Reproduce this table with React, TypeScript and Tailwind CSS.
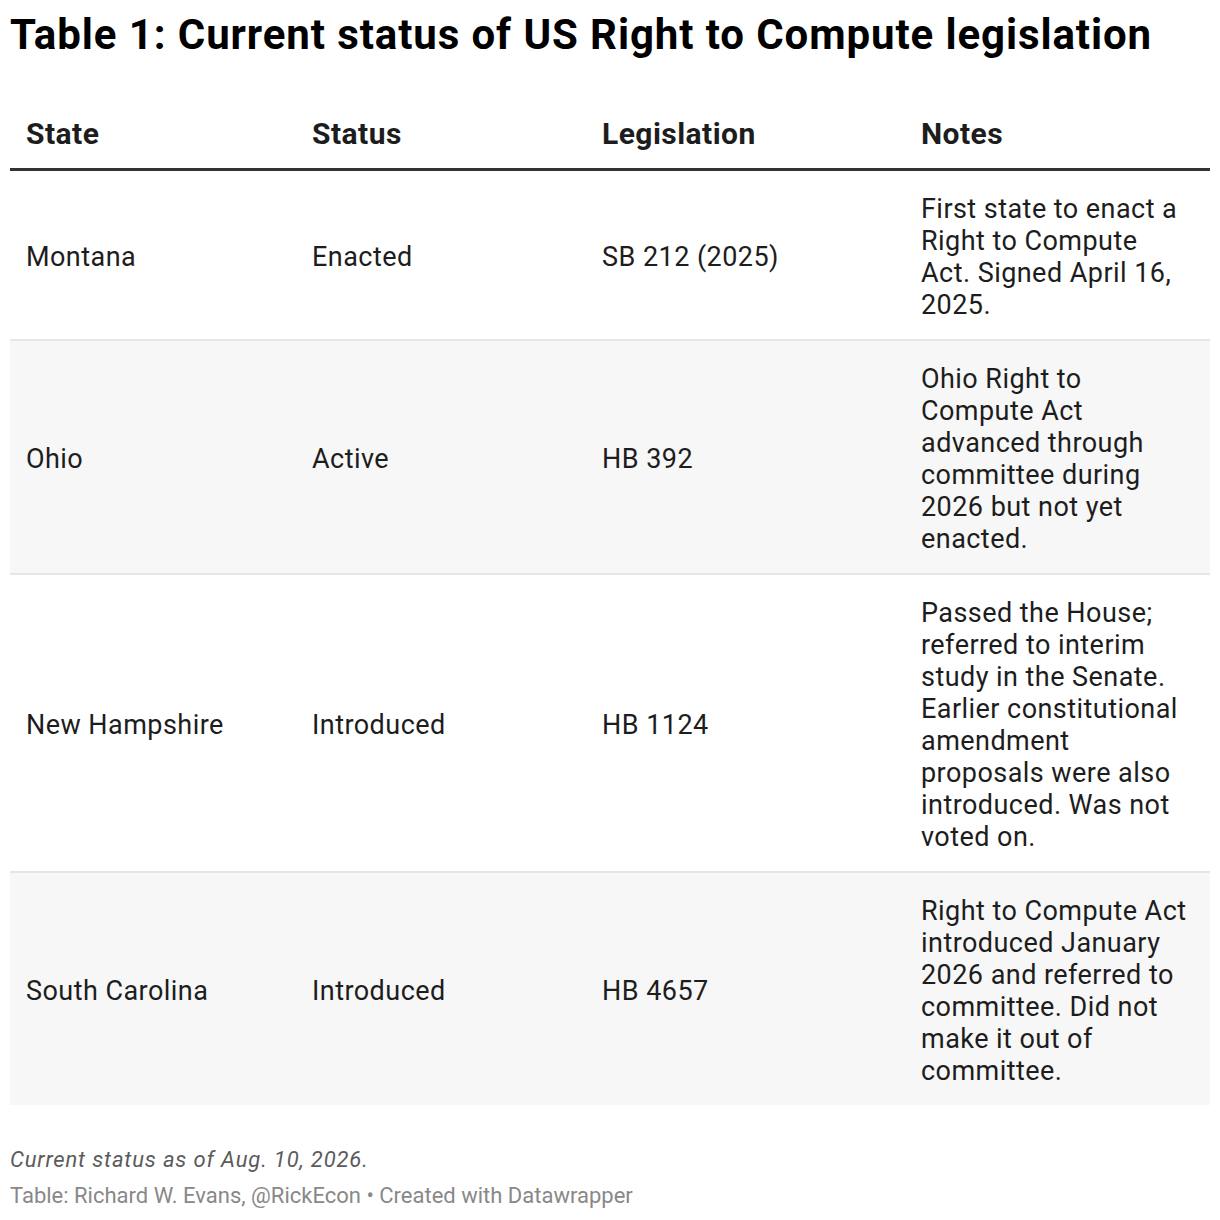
const rows = [
	{
		state: "Montana",
		status: "Enacted",
		bill: "SB 212 (2025)",
		notes: "First state to enact a Right to Compute Act. Signed April 16, 2025.",
	},
	{
		state: "Ohio",
		status: "Active",
		bill: "HB 392",
		notes: "Ohio Right to Compute Act advanced through committee during 2026 but not yet enacted.",
	},
	{
		state: "New Hampshire",
		status: "Introduced",
		bill: "HB 1124",
		notes:
			"Passed the House; referred to interim study in the Senate. Earlier constitutional amendment proposals were also introduced. Was not voted on.",
	},
	{
		state: "South Carolina",
		status: "Introduced",
		bill: "HB 4657",
		notes:
			"Right to Compute Act introduced January 2026 and referred to committee. Did not make it out of committee.",
	},
];

export default function App() {
	return (
		<div className="w-[1220px] min-h-[1220px] bg-white px-[10px] pt-[11px] font-['Roboto',sans-serif] text-[#1d1d1d]">
			<h1 className="text-[42px] leading-[48px] font-bold tracking-[0.9px] text-black">
				Table 1: Current status of US Right to Compute legislation
			</h1>

			<table className="mt-[56px] w-[1200px] table-fixed border-collapse">
				<thead>
					<tr className="border-b-[3px] border-[#333333]">
						<th className="w-[286px] pl-4 pt-[1px] pb-[16px] text-left text-[30px] leading-[36px] font-bold tracking-[0.45px]">
							State
						</th>
						<th className="w-[290px] pl-4 pt-[1px] pb-[16px] text-left text-[30px] leading-[36px] font-bold tracking-[0.45px]">
							Status
						</th>
						<th className="w-[319px] pl-4 pt-[1px] pb-[16px] text-left text-[30px] leading-[36px] font-bold tracking-[0.45px]">
							Legislation
						</th>
						<th className="w-[305px] pl-4 pt-[1px] pb-[16px] text-left text-[30px] leading-[36px] font-bold tracking-[0.45px]">
							Notes
						</th>
					</tr>
				</thead>
				<tbody className="text-[27px] leading-[32px] tracking-[0.45px]">
					{rows.map((r, i) => (
						<tr
							key={r.state}
							className={`${i % 2 === 1 ? "bg-[#f7f7f7]" : "bg-white"} ${
								i < rows.length - 1 ? "border-b-2 border-[#e6e6e6]" : ""
							}`}
						>
							<td className="pl-4 pt-[22px] pb-[18px] align-middle">{r.state}</td>
							<td className="pl-4 pt-[22px] pb-[18px] align-middle">{r.status}</td>
							<td className="pl-4 pt-[22px] pb-[18px] align-middle">{r.bill}</td>
							<td className="pl-4 pr-[20px] pt-[22px] pb-[18px] align-middle">{r.notes}</td>
						</tr>
					))}
				</tbody>
			</table>

			{/* footer notes */}
			<div className="mt-[40px] text-[22px] leading-[30px] italic tracking-[0.85px] text-[#5b5b5b]">
				Current status as of Aug. 10, 2026.
			</div>
			<div className="mt-[6px] text-[22px] leading-[30px] text-[#888888]">
				Table: Richard W. Evans, @RickEcon • Created with Datawrapper
			</div>
		</div>
	);
}
